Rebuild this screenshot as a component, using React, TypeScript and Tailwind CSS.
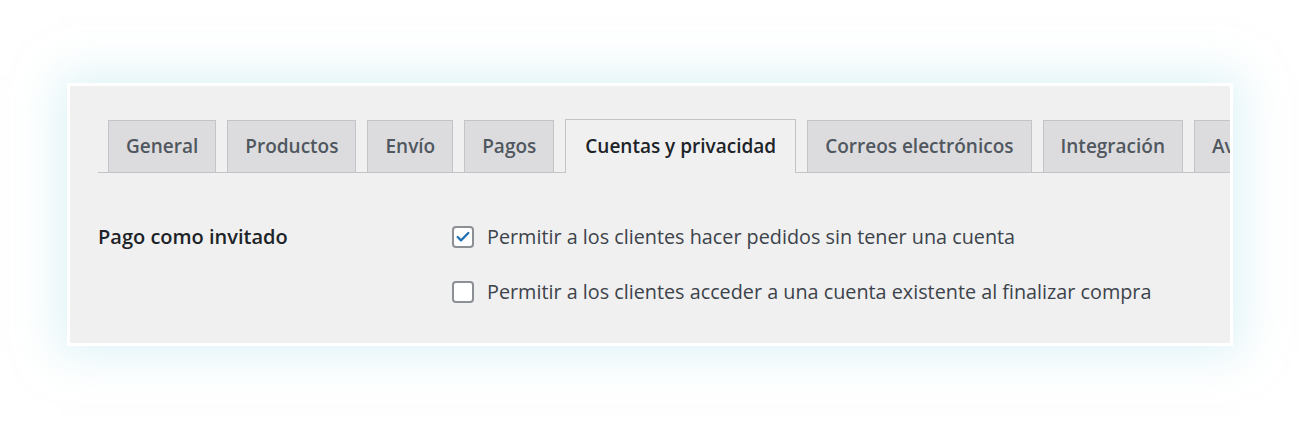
import { Check } from "lucide-react";

const tabs = [
  "General",
  "Productos",
  "Envío",
  "Pagos",
  "Cuentas y privacidad",
  "Correos electrónicos",
  "Integración",
  "Avanzado",
];

const ACTIVE = "Cuentas y privacidad";

export default function App() {
  return (
    <div
      className="w-[1300px] h-[427px] bg-white pt-[83px] pl-[67px] overflow-hidden"
      style={{ fontFamily: '"Open Sans", "Liberation Sans", sans-serif' }}
    >
      <div className="w-[1166px] h-[263px] border-[3px] border-white bg-[#f0f0f1] overflow-hidden shadow-[0_0_40px_8px_rgba(190,232,240,0.5)]">
        {/* tabs */}
        <div className="ml-[28px] mt-[33px] flex items-end gap-[11px] border-b border-[#c3c4c7] pl-[10px] whitespace-nowrap">
          {tabs.map((tab) => {
            const active = tab === ACTIVE;
            return (
              <div
                key={tab}
                className={
                  active
                    ? "h-[54px] -mb-px flex items-center px-[19px] border border-b-0 border-[#c3c4c7] bg-[#f0f0f1] text-[19px] font-semibold text-[#1d2327]"
                    : "h-[53px] -mb-px flex items-center px-[17px] border border-[#c3c4c7] bg-[#dcdcde] text-[19px] font-semibold text-[#50575e]"
                }
              >
                {tab}
              </div>
            );
          })}
        </div>

        {/* settings row */}
        <div className="flex pl-[28px] pt-[52px]">
          <div className="w-[354px] text-[20px] font-semibold text-[#1d2327] leading-[24px]">
            Pago como invitado
          </div>
          <div className="flex flex-col gap-[31px]">
            <label className="flex items-center gap-[13px] text-[19.8px] text-[#3c434a] leading-[24px]">
              <span className="w-[22px] h-[22px] rounded-[4px] border-2 border-[#8c8f94] bg-white flex items-center justify-center">
                <Check className="w-[16px] h-[16px] text-[#2271b1]" strokeWidth={3.5} />
              </span>
              Permitir a los clientes hacer pedidos sin tener una cuenta
            </label>
            <label className="flex items-center gap-[13px] text-[19.8px] text-[#3c434a] leading-[24px]">
              <span className="w-[22px] h-[22px] rounded-[4px] border-2 border-[#8c8f94] bg-white" />
              Permitir a los clientes acceder a una cuenta existente al finalizar compra
            </label>
          </div>
        </div>
      </div>
    </div>
  );
}
